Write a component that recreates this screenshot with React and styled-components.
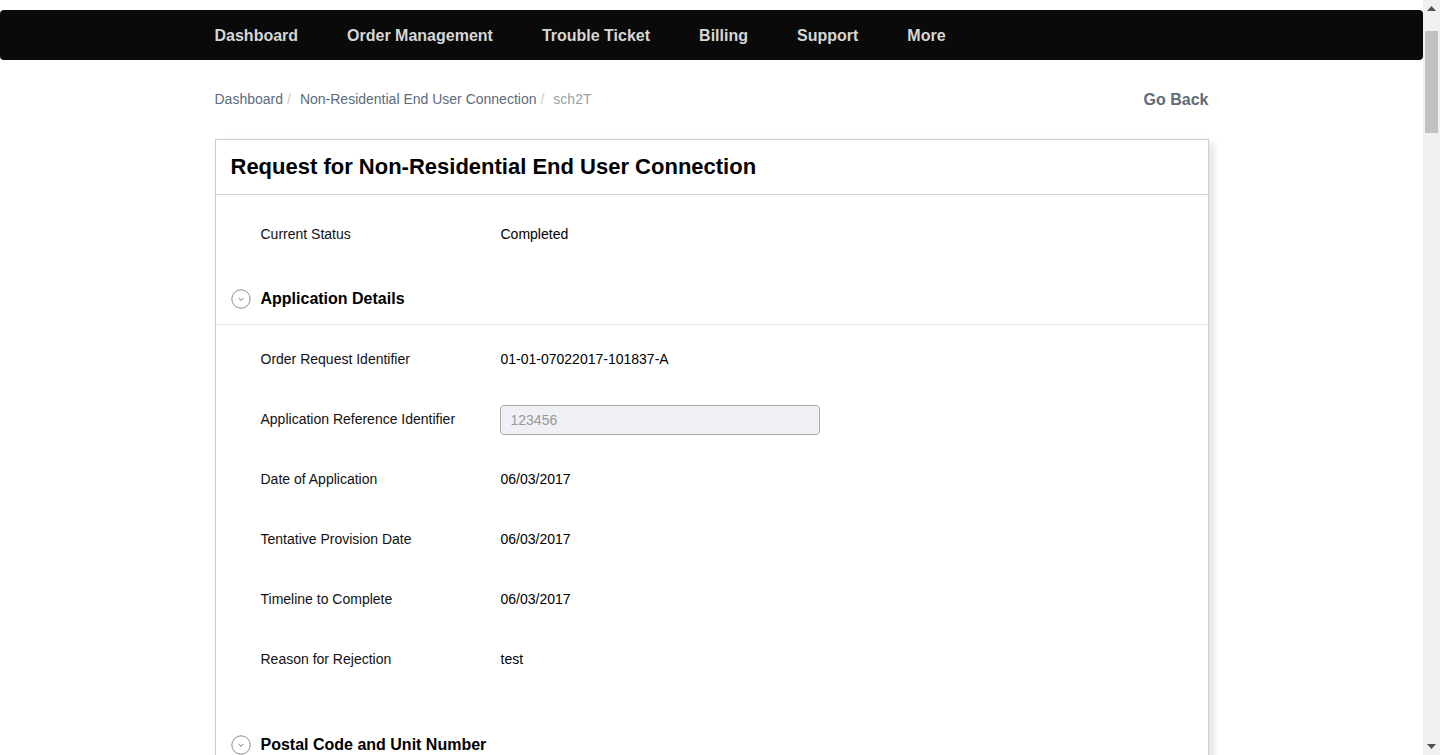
import React from "react";
import styled, { createGlobalStyle } from "styled-components";

const Global = createGlobalStyle`
  html, body { margin: 0; padding: 0; background: #fff; height: 100%; overflow: hidden; }
  body { font-family: "Liberation Sans", Arial, sans-serif; color: #000; }
  * { box-sizing: border-box; }
`;

const Shell = styled.div`
  display: flex;
  height: 100vh;
`;

const Main = styled.div`
  flex: 1;
  min-width: 0;
  overflow-y: auto;
  scrollbar-width: none;
  padding-top: 10px;
  &::-webkit-scrollbar { display: none; }
`;

const ScrollRail = styled.div`
  width: 17px;
  flex: none;
  background: #f1f1f1;
  display: flex;
  flex-direction: column;
`;

const ScrollButton = styled.div`
  height: 17px;
  flex: none;
  display: flex;
  align-items: center;
  justify-content: center;
`;

const ScrollTrack = styled.div`
  flex: 1;
  padding: 14px 2px 0;
`;

const ScrollThumb = styled.div`
  height: 102px;
  background: #c1c1c1;
`;

const NavBar = styled.nav`
  height: 50px;
  background: #0a0a0a;
  border-radius: 4px;
  display: flex;
  align-items: center;
`;

const Container = styled.div`
  width: 994px;
  margin: 0 auto;
`;

const NavList = styled(Container)`
  display: flex;
  align-items: center;
  gap: 49px;
  padding-top: 2px;
`;

const NavItem = styled.a`
  color: #d6d6d6;
  font-weight: bold;
  font-size: 16px;
  text-decoration: none;
  white-space: nowrap;
`;

const CrumbRow = styled(Container)`
  display: flex;
  justify-content: space-between;
  align-items: center;
  height: 40px;
  margin-top: 20px;
  margin-bottom: 19px;
`;

const Crumbs = styled.div`
  display: flex;
  align-items: center;
  font-size: 14px;
  margin-top: -2px;
`;

const Crumb = styled.span`
  color: ${(p) => (p.$active ? "#9aa0a6" : "#5b6b7b")};
`;

const Sep = styled.span`
  color: #c8c8c8;
  padding: 0 9px 0 4px;
`;

const GoBack = styled.a`
  color: #5f6b76;
  font-weight: bold;
  font-size: 16px;
`;

const Card = styled(Container)`
  border: 1px solid #cfcfcf;
  box-shadow: 4px 3px 8px rgba(0, 0, 0, 0.12);
  margin-bottom: 40px;
`;

const CardHeader = styled.div`
  height: 55px;
  border-bottom: 1px solid #cfcfcf;
  display: flex;
  align-items: center;
  padding-left: 15px;
`;

const Title = styled.h1`
  margin: 0;
  font-size: 22px;
  font-weight: bold;
  color: #000;
`;

const CardBody = styled.div`
  padding-top: 9px;
`;

const Row = styled.div`
  height: 60px;
  display: flex;
  align-items: center;
  padding-left: 45px;
  font-size: 14px;
`;

const Label = styled.div`
  width: 240px;
  color: #111;
`;

const Value = styled.div`
  color: #000;
`;

const Input = styled.input`
  width: 320px;
  height: 30px;
  border: 1px solid #a9a9a9;
  border-radius: 4px;
  background: #eef0f5;
  color: #999;
  font-family: "Liberation Sans", Arial, sans-serif;
  font-size: 14px;
  padding: 0 10px;
  margin-left: -1px;
  margin-top: 2px;
  outline: none;
`;

const SectionHeader = styled.div`
  height: 53px;
  margin-top: 8px;
  border-bottom: 1px solid #ececec;
  display: flex;
  align-items: center;
  padding-left: 15px;
  padding-top: 1px;
  gap: 10px;
`;

const SectionTitle = styled.h2`
  margin: 0;
  font-size: 16px;
  font-weight: bold;
  color: #000;
`;

const Rows = styled.div`
  padding-top: 4px;
  padding-bottom: 21px;
`;

const ToggleIcon = () => (
  <svg width="20" height="20" viewBox="0 0 20 20">
    <circle cx="10" cy="10" r="9.2" fill="none" stroke="#8a8a8a" strokeWidth="1" />
    <path d="M7.6 9 L10 11.4 L12.4 9" fill="none" stroke="#777" strokeWidth="1" />
  </svg>
);

const Arrow = ({ down }) => (
  <svg width="9" height="5" viewBox="0 0 9 5">
    <path d={down ? "M0 0 L9 0 L4.5 5 Z" : "M0 5 L9 5 L4.5 0 Z"} fill="#505050" />
  </svg>
);

const navItems = ["Dashboard", "Order Management", "Trouble Ticket", "Billing", "Support", "More"];

const sections = [
  {
    title: "Application Details",
    rows: [
      ["Order Request Identifier", "01-01-07022017-101837-A"],
      ["Application Reference Identifier", { input: "123456" }],
      ["Date of Application", "06/03/2017"],
      ["Tentative Provision Date", "06/03/2017"],
      ["Timeline to Complete", "06/03/2017"],
      ["Reason for Rejection", "test"],
    ],
  },
  {
    title: "Postal Code and Unit Number",
    rows: [
      ["Postal Code", "123456"],
      ["Unit Number", "#01-01"],
      ["Building Name", "test"],
      ["Street Name", "test"],
      ["Block/House Number", "12"],
      ["Building Type", "Non-Residential"],
    ],
  },
  {
    title: "Service Details",
    rows: [
      ["Service Type", "Non-Residential End User Connection"],
      ["Number of Connections", "1"],
      ["Redundancy Required", "No"],
      ["Installation Type", "Standard"],
      ["Preferred Date", "06/03/2017"],
      ["Preferred Time Slot", "AM"],
      ["Remarks", "test"],
    ],
  },
  {
    title: "End User Details",
    rows: [
      ["Company Name", "test"],
      ["Contact Person", "test"],
      ["Contact Number", "12345678"],
      ["Email Address", "test@test.com"],
      ["Alternate Contact Person", "test"],
      ["Alternate Contact Number", "12345678"],
    ],
  },
  {
    title: "Requesting Licensee Details",
    rows: [
      ["Licensee Name", "test"],
      ["Contact Person", "test"],
      ["Contact Number", "12345678"],
      ["Email Address", "test@test.com"],
    ],
  },
];

export default function App() {
  return (
    <>
      <Global />
      <Shell>
        <Main>
          <NavBar>
            <NavList>
              {navItems.map((n) => (
                <NavItem key={n}>{n}</NavItem>
              ))}
            </NavList>
          </NavBar>
          <CrumbRow>
            <Crumbs>
              <Crumb>Dashboard</Crumb>
              <Sep>/</Sep>
              <Crumb>Non-Residential End User Connection</Crumb>
              <Sep>/</Sep>
              <Crumb $active>sch2T</Crumb>
            </Crumbs>
            <GoBack>Go Back</GoBack>
          </CrumbRow>
          <Card>
            <CardHeader>
              <Title>Request for Non-Residential End User Connection</Title>
            </CardHeader>
            <CardBody>
              <Row>
                <Label>Current Status</Label>
                <Value>Completed</Value>
              </Row>
              {sections.map((s) => (
                <div key={s.title}>
                  <SectionHeader>
                    <ToggleIcon />
                    <SectionTitle>{s.title}</SectionTitle>
                  </SectionHeader>
                  <Rows>
                    {s.rows.map(([l, v]) => (
                      <Row key={l}>
                        <Label>{l}</Label>
                        {typeof v === "object" ? (
                          <Input readOnly value={v.input} />
                        ) : (
                          <Value>{v}</Value>
                        )}
                      </Row>
                    ))}
                  </Rows>
                </div>
              ))}
            </CardBody>
          </Card>
        </Main>
        <ScrollRail>
          <ScrollButton>
            <Arrow />
          </ScrollButton>
          <ScrollTrack>
            <ScrollThumb />
          </ScrollTrack>
          <ScrollButton>
            <Arrow down />
          </ScrollButton>
        </ScrollRail>
      </Shell>
    </>
  );
}
